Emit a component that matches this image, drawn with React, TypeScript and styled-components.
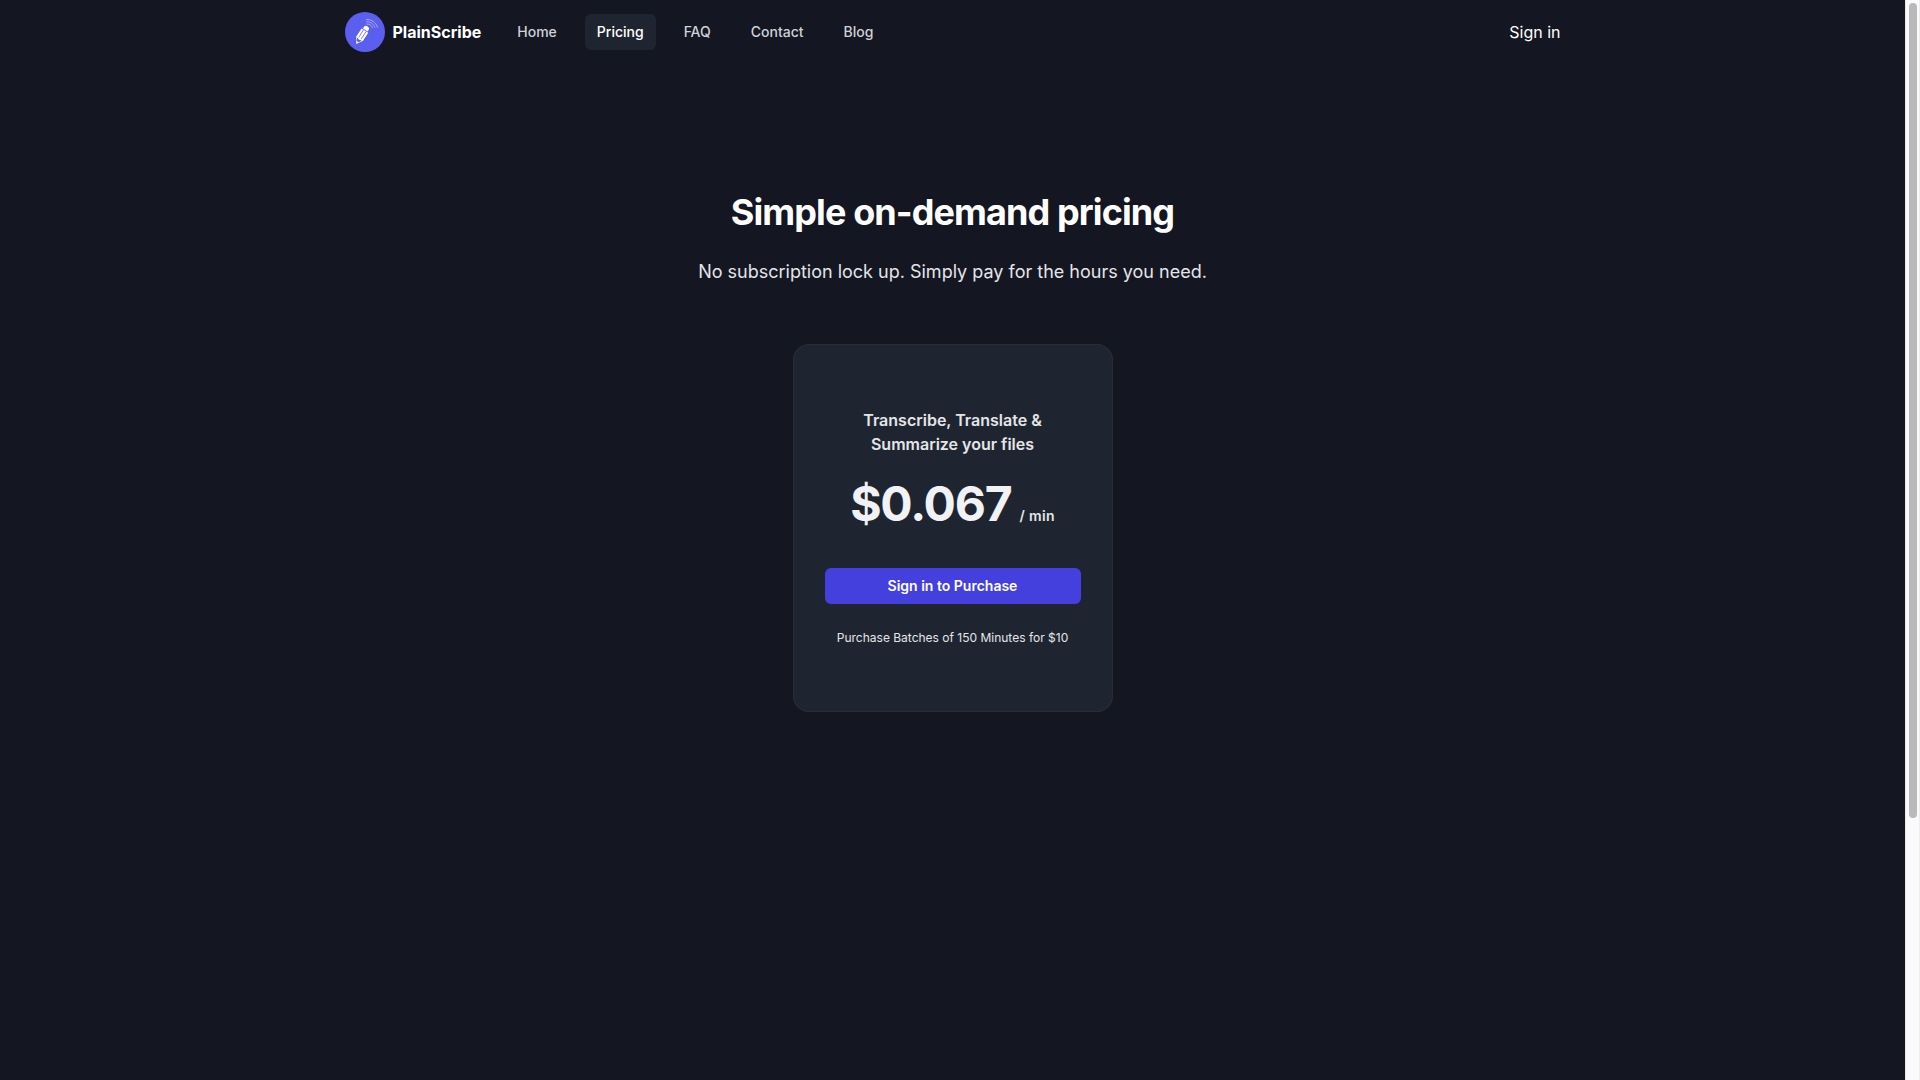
import React from "react";
import styled, { createGlobalStyle } from "styled-components";

const Global = createGlobalStyle`
  *, *::before, *::after { box-sizing: border-box; }
  html { background: #141622; scrollbar-width: none; }
  body {
    margin: 0;
    font-family: Inter, "Liberation Sans", sans-serif;
    font-size: 16px;
    line-height: 24px;
    color: #ffffff;
    -webkit-font-smoothing: antialiased;
  }
  h1, h2, p { margin: 0; }
  a { color: inherit; text-decoration: none; }
`;

const Shell = styled.div`
  display: flex;
  min-height: 100vh;
  background: #141622;
`;

const Page = styled.div`
  flex: 1;
  min-width: 0;
`;

const ScrollTrack = styled.div`
  position: sticky;
  top: 0;
  display: flex;
  justify-content: center;
  width: 15px;
  height: 100vh;
  padding: 3px 0 2px;
  background: #fafafa;
  border-left: 1px solid #e8e8e8;
  border-right: 1px solid #ededed;
`;

const ScrollThumb = styled.div`
  width: 8px;
  height: 75.8%;
  border-radius: 4px;
  background: #b9b9b9;
`;

const Header = styled.header`
  display: flex;
  align-items: center;
  justify-content: space-between;
  max-width: 1280px;
  height: 64px;
  margin: 0 auto;
  padding: 0 32px;
`;

const Left = styled.div`
  display: flex;
  align-items: center;
  gap: 24px;
`;

const Brand = styled.a`
  display: flex;
  align-items: center;
  gap: 8px;
  font-weight: 700;
`;

const Nav = styled.nav`
  display: flex;
  gap: 16px;
`;

const NavLink = styled.a<{ $active?: boolean }>`
  padding: 8px 12px;
  border-radius: 6px;
  font-size: 14px;
  line-height: 20px;
  font-weight: 500;
  color: ${(p) => (p.$active ? "#ffffff" : "#d0d2d8")};
  background: ${(p) => (p.$active ? "#1f2530" : "transparent")};
`;

const Main = styled.main`
  display: flex;
  flex-direction: column;
  align-items: center;
  padding: 128px 32px;
  text-align: center;
`;

const Title = styled.h1`
  font-size: 36px;
  line-height: 40px;
  font-weight: 700;
  letter-spacing: -0.025em;
`;

const Lead = styled.p`
  margin-top: 24px;
  font-size: 18px;
  line-height: 32px;
  color: #e4e5e9;
`;

const Card = styled.section`
  width: 100%;
  max-width: 320px;
  margin-top: 56px;
  padding: 64px 32px;
  border-radius: 16px;
  background: #1f2530;
  box-shadow: inset 0 0 0 1px #272d38;
`;

const CardTitle = styled.h2`
  font-size: 16px;
  line-height: 24px;
  font-weight: 600;
  color: #e4e5e9;
`;

const Price = styled.p`
  display: flex;
  align-items: baseline;
  justify-content: center;
  gap: 8px;
  margin-top: 24px;
`;

const Amount = styled.span`
  font-size: 48px;
  line-height: 48px;
  font-weight: 700;
  letter-spacing: -0.025em;
  color: #f1f2f6;
`;

const Unit = styled.span`
  font-size: 14px;
  line-height: 24px;
  font-weight: 600;
  letter-spacing: 0.025em;
  color: #e4e5e9;
`;

const Buy = styled.button`
  display: block;
  width: 100%;
  margin-top: 40px;
  padding: 8px 12px;
  border: 0;
  border-radius: 6px;
  background: #4440de;
  color: #ffffff;
  font-family: inherit;
  font-size: 14px;
  line-height: 20px;
  font-weight: 600;
  cursor: pointer;
`;

const Note = styled.p`
  margin-top: 24px;
  font-size: 12px;
  line-height: 20px;
  color: #e4e5e9;
`;

const links = ["Home", "Pricing", "FAQ", "Contact", "Blog"];

function Logo() {
  return (
    <svg width="40" height="40" viewBox="0 0 40 40" fill="none" aria-hidden="true">
      <circle cx="20" cy="20" r="20" fill="#5b5fef" />
      <g transform="translate(11.2 32) rotate(33)">
        <path d="M0 0 L-4 -6.4 V-16 H4 V-6.4 Z" fill="#ffffff" />
        <path d="M-1.5 -6.8 V-16 M1.5 -6.8 V-16" stroke="#5b5fef" strokeWidth="0.7" />
        <path d="M-1.3 -2.8 L-2.8 -6 L0 -5.2 L2.8 -6 L1.3 -2.8 Z" fill="#5b5fef" />
        <path d="M-2.8 -16.6 H2.8 V-19 Q2.8 -21 0 -21 Q-2.8 -21 -2.8 -19 Z" fill="#ffffff" />
      </g>
      <g stroke="#b4b6f9" strokeWidth="0.8" strokeLinecap="round">
        <path d="M22 12 Q26 11.8 27.4 15.6" />
        <path d="M21.6 9.7 Q27.8 9.6 30 15.5" />
        <path d="M21.4 7.4 Q29.8 7.2 32.6 15.4" />
      </g>
    </svg>
  );
}

export default function App() {
  return (
    <>
      <Global />
      <Shell>
        <Page>
          <Header>
            <Left>
              <Brand href="#">
                <Logo />
                PlainScribe
              </Brand>
              <Nav aria-label="Main">
                {links.map((name) => (
                  <NavLink
                    key={name}
                    href="#"
                    $active={name === "Pricing"}
                    aria-current={name === "Pricing" ? "page" : undefined}
                  >
                    {name}
                  </NavLink>
                ))}
              </Nav>
            </Left>
            <a href="#">Sign in</a>
          </Header>
          <Main>
            <Title>Simple on-demand pricing</Title>
            <Lead>No subscription lock up. Simply pay for the hours you need.</Lead>
            <Card>
              <CardTitle>Transcribe, Translate &amp; Summarize your files</CardTitle>
              <Price>
                <Amount>$0.067</Amount>
                <Unit>/ min</Unit>
              </Price>
              <Buy type="button">Sign in to Purchase</Buy>
              <Note>Purchase Batches of 150 Minutes for $10</Note>
            </Card>
          </Main>
        </Page>
        <ScrollTrack aria-hidden="true">
          <ScrollThumb />
        </ScrollTrack>
      </Shell>
    </>
  );
}
